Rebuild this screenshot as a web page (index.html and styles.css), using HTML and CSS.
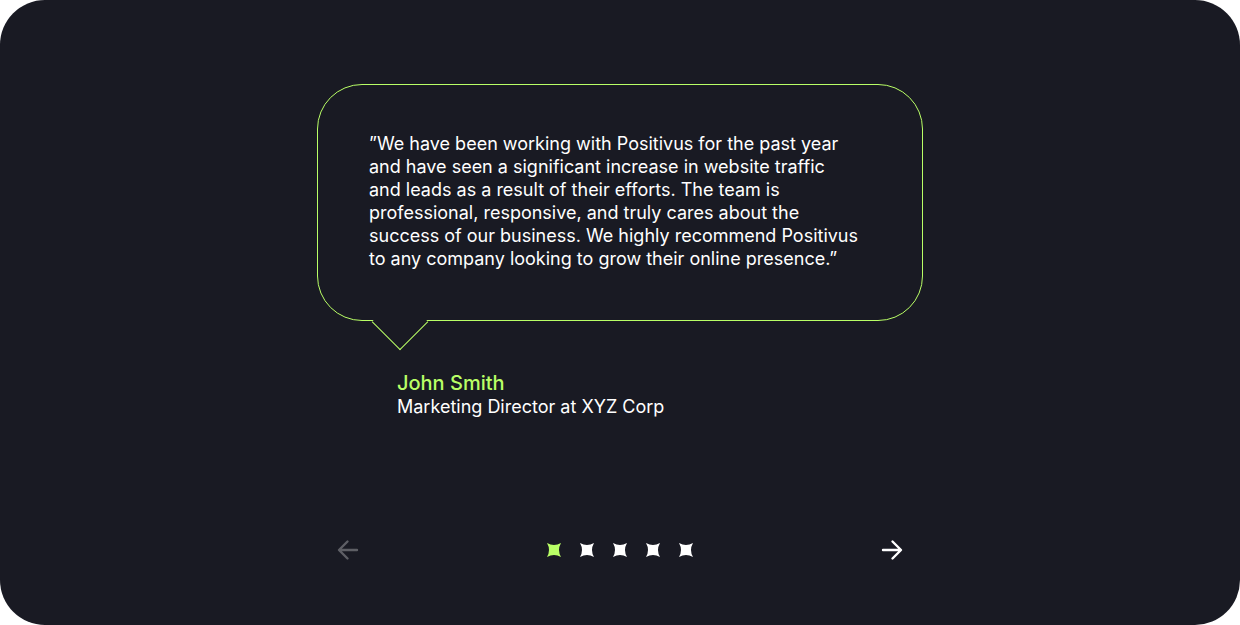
FILE: index.html
```html
<!DOCTYPE html>
<html lang="en">
<head>
<meta charset="utf-8">
<title>Testimonials</title>
<link rel="stylesheet" href="styles.css">
</head>
<body>
<section class="card">
  <div class="slide">
    <div class="bubble">
      <p class="quote">”We have been working with Positivus for the past year<br>and have seen a significant increase in website traffic<br>and leads as a result of their efforts. The team is<br>professional, responsive, and truly cares about the<br>success of our business. We highly recommend Positivus<br>to any company looking to grow their online presence.”</p>
    </div>
    <div class="author">
      <div class="name">John Smith</div>
      <div class="role">Marketing Director at XYZ Corp</div>
    </div>
  </div>
  <nav class="nav">
    <button class="arrow arrow-prev" aria-label="Previous">
      <svg width="24" height="24" viewBox="0 0 24 24" fill="none" stroke="currentColor" stroke-width="2.4" stroke-linecap="round" stroke-linejoin="round"><path d="M21 12H3.5M11.5 3.5L3 12l8.5 8.5"/></svg>
    </button>
    <div class="dots">
      <svg class="dot active" width="14" height="14" viewBox="0 0 14 14"><path d="M0 0Q7 4 14 0Q10 7 14 14Q7 10 0 14Q4 7 0 0Z"/></svg>
      <svg class="dot" width="14" height="14" viewBox="0 0 14 14"><path d="M0 0Q7 4 14 0Q10 7 14 14Q7 10 0 14Q4 7 0 0Z"/></svg>
      <svg class="dot" width="14" height="14" viewBox="0 0 14 14"><path d="M0 0Q7 4 14 0Q10 7 14 14Q7 10 0 14Q4 7 0 0Z"/></svg>
      <svg class="dot" width="14" height="14" viewBox="0 0 14 14"><path d="M0 0Q7 4 14 0Q10 7 14 14Q7 10 0 14Q4 7 0 0Z"/></svg>
      <svg class="dot" width="14" height="14" viewBox="0 0 14 14"><path d="M0 0Q7 4 14 0Q10 7 14 14Q7 10 0 14Q4 7 0 0Z"/></svg>
    </div>
    <button class="arrow arrow-next" aria-label="Next">
      <svg width="24" height="24" viewBox="0 0 24 24" fill="none" stroke="currentColor" stroke-width="2.4" stroke-linecap="round" stroke-linejoin="round"><path d="M3 12h17.5M12.5 3.5L21 12l-8.5 8.5"/></svg>
    </button>
  </nav>
</section>
</body>
</html>
```

FILE: styles.css
```css
* { box-sizing: border-box; }
html, body { margin: 0; padding: 0; background: #ffffff; }
body { font-family: Inter, "Noto Sans", sans-serif; }

.card {
  width: 1240px;
  height: 625px;
  background: #191A23;
  border-radius: 45px;
  display: flex;
  flex-direction: column;
  align-items: center;
  padding-top: 84px;
}

.slide {
  width: 606px;
  display: flex;
  flex-direction: column;
}

.bubble {
  position: relative;
  border: 1px solid #B9FF66;
  border-radius: 45px;
  padding: 47px 30px 49px 51px;
  height: 237px;
}
.bubble::after {
  content: "";
  position: absolute;
  left: 62px;
  bottom: -21.5px;
  width: 39px;
  height: 39px;
  background: #191A23;
  border-right: 1px solid #B9FF66;
  border-bottom: 1px solid #B9FF66;
  transform: rotate(45deg);
}

.quote {
  margin: 0;
  color: #ffffff;
  font-size: 18px;
  line-height: 23px;
  white-space: nowrap;
}

.author {
  margin-top: 51px;
  padding-left: 80px;
  line-height: 23px;
}
.name {
  color: #B9FF66;
  font-size: 20px;
  font-weight: 500;
}
.role {
  color: #ffffff;
  font-size: 18px;
}

.nav {
  width: 606px;
  margin-top: 120px;
  padding: 0 19px 0 19px;
  display: flex;
  align-items: center;
  justify-content: space-between;
}
.arrow {
  background: none;
  border: 0;
  padding: 0;
  width: 24px;
  height: 24px;
  display: flex;
  cursor: pointer;
}
.arrow-prev { color: rgba(255, 255, 255, 0.3); }
.arrow-next { color: #ffffff; }

.dots {
  display: flex;
  gap: 19px;
}
.dot { fill: #ffffff; display: block; }
.dot.active { fill: #B9FF66; }
```
